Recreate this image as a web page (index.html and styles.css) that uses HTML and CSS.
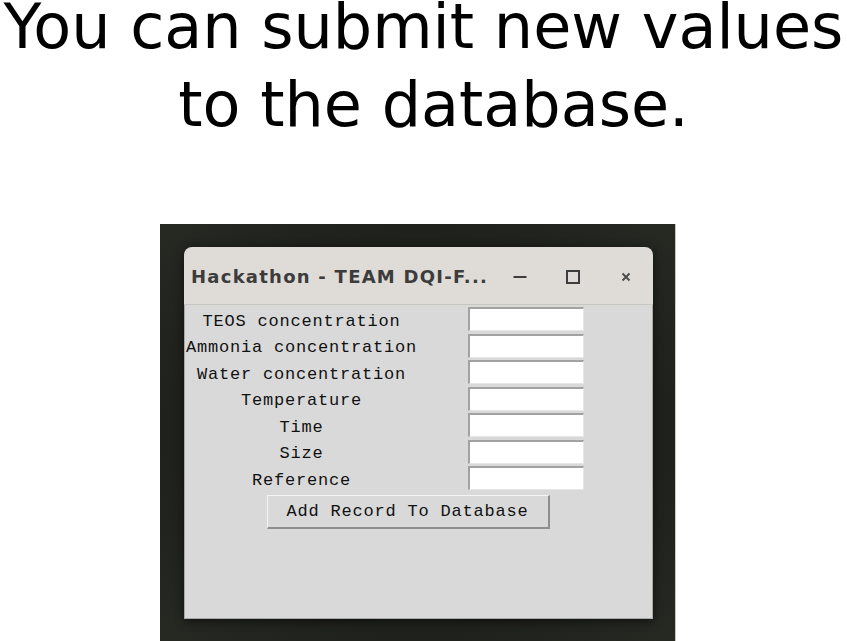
FILE: index.html
```html
<!DOCTYPE html>
<html>
<head>
<meta charset="utf-8">
<link rel="stylesheet" href="styles.css">
</head>
<body>
<h1 class="headline">You can submit new values<br><span class="line2">to the database.</span></h1>
<div class="desktop">
  <div class="window">
    <div class="titlebar">
      <span class="title">Hackathon - TEAM DQI-F...</span>
      <div class="controls">
        <span class="ctl"><svg width="14" height="14" viewBox="0 0 14 14"><rect x="0.5" y="6" width="13" height="2" fill="#3d3d3d"/></svg></span>
        <span class="ctl"><svg width="14" height="14" viewBox="0 0 14 14"><rect x="1" y="1" width="12" height="12" fill="none" stroke="#3d3d3d" stroke-width="2"/></svg></span>
        <span class="ctl"><svg width="10" height="10" viewBox="0 0 10 10"><path d="M1.5 1.5 L8.5 8.5 M8.5 1.5 L1.5 8.5" stroke="#4a4a4a" stroke-width="1.8" fill="none"/></svg></span>
      </div>
    </div>
    <div class="content">
      <div class="form">
        <span class="label">TEOS concentration</span><input class="entry" type="text">
        <span class="label">Ammonia concentration</span><input class="entry" type="text">
        <span class="label">Water concentration</span><input class="entry" type="text">
        <span class="label">Temperature</span><input class="entry" type="text">
        <span class="label">Time</span><input class="entry" type="text">
        <span class="label">Size</span><input class="entry" type="text">
        <span class="label">Reference</span><input class="entry" type="text">
        <button class="submit" type="button">Add Record To Database</button>
      </div>
    </div>
  </div>
</div>
</body>
</html>
```
FILE: styles.css
```css
html, body {
  margin: 0;
  padding: 0;
  background: #ffffff;
  overflow: hidden;
}

.headline {
  margin: -12px 0 0 0;
  font-family: "DejaVu Sans", sans-serif;
  font-weight: normal;
  font-size: 62px;
  line-height: 78px;
  text-align: center;
  color: #000;
  white-space: nowrap;
}

.line2 {
  padding-left: 20px;
}

.desktop {
  margin: 80px 0 0 160px;
  width: 516px;
  height: 417px;
  box-sizing: border-box;
  padding: 23px 23px 22px 24px;
  background: radial-gradient(ellipse at center, #1c1e19 55%, #272923 100%);
  border-right: 1px solid #c8c8c8;
}

.window {
  width: 469px;
  height: 372px;
  display: flex;
  flex-direction: column;
  border-radius: 8px 8px 0 0;
  box-shadow: 0 2px 10px rgba(0, 0, 0, 0.55);
}

.titlebar {
  height: 58px;
  box-sizing: border-box;
  padding: 2px 1px 0 7px;
  display: flex;
  align-items: center;
  background: #dfdbd7;
  border-radius: 8px 8px 0 0;
  border-bottom: 1px solid #c9c5c1;
}

.title {
  flex: 1;
  font-family: "DejaVu Sans", sans-serif;
  font-weight: bold;
  font-size: 18px;
  letter-spacing: 1.25px;
  color: #3c3c3c;
  white-space: nowrap;
}

.controls {
  display: flex;
}

.ctl {
  width: 53px;
  display: flex;
  justify-content: center;
  align-items: center;
}

.content {
  flex: 1;
  background: #d9d9d9;
  border: 1px solid #a9a9a9;
  border-top: none;
  padding-top: 2px;
}

.form {
  display: grid;
  grid-template-columns: 233px 213px;
  row-gap: 2.5px;
  align-items: center;
}

.label {
  padding-top: 5px;
  text-align: center;
  font-family: "Liberation Mono", monospace;
  font-size: 17px;
  line-height: 18px;
  letter-spacing: 0.8px;
  color: #111;
  white-space: nowrap;
}

.entry {
  justify-self: center;
  width: 116px;
  height: 24px;
  box-sizing: border-box;
  margin: 0 0 0 2px;
  padding: 0;
  background: #ffffff;
  border-style: solid;
  border-width: 2px 1px 1px 2px;
  border-color: #a2a2a2 #e6e6e6 #e6e6e6 #a2a2a2;
  outline: none;
}

.submit {
  grid-column: 1 / 3;
  justify-self: center;
  margin-top: 2.5px;
  width: 283px;
  height: 34px;
  box-sizing: border-box;
  background: #d9d9d9;
  border-style: solid;
  border-width: 1px 2px 2px 1px;
  border-color: #f4f4f4 #8e8e8e #8e8e8e #f4f4f4;
  font-family: "Liberation Mono", monospace;
  font-size: 17px;
  letter-spacing: 0.8px;
  color: #111;
  padding: 0;
}
```
